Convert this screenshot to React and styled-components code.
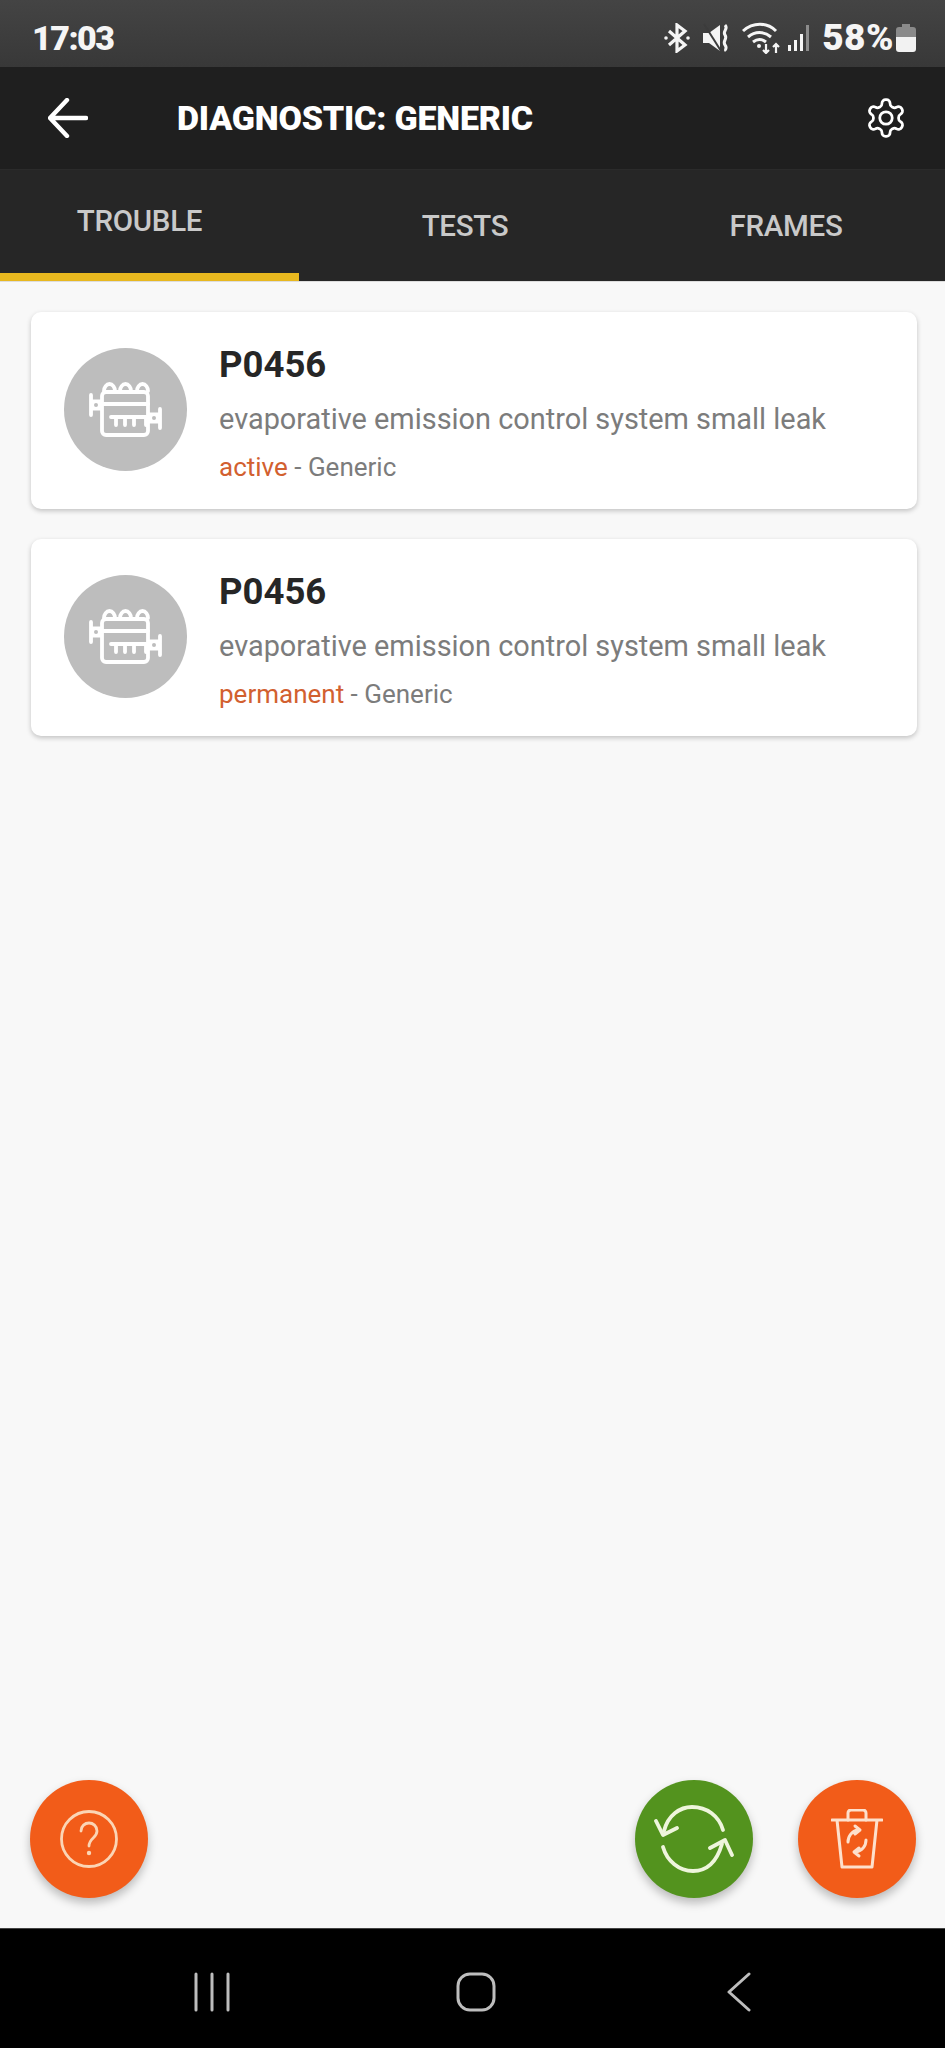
import React from "react";
import styled, { createGlobalStyle } from "styled-components";

const GlobalStyle = createGlobalStyle`
  html, body {
    margin: 0;
    padding: 0;
    background: #f8f8f8;
    font-family: Roboto, "Liberation Sans", sans-serif;
  }
`;

const Page = styled.div`
  width: 945px;
  height: 2048px;
  display: flex;
  flex-direction: column;
  overflow: hidden;
  background: #f8f8f8;
`;

const StatusBar = styled.div`
  height: 67px;
  flex: none;
  box-sizing: border-box;
  padding: 8px 29px 0 32px;
  display: flex;
  align-items: center;
  justify-content: space-between;
  background: linear-gradient(#444444, #383838);
  color: #f5f5f5;
`;

const StatusText = styled.span`
  font-family: Roboto, sans-serif;
  font-weight: 900;
  font-size: ${(p) => p.$size || "34px"};
  letter-spacing: ${(p) => p.$spacing || "0"};
  line-height: 1;
`;

const StatusIcons = styled.div`
  display: flex;
  align-items: center;
`;

const AppBar = styled.div`
  height: 103px;
  flex: none;
  box-sizing: border-box;
  padding: 0 37px 0 48px;
  display: flex;
  align-items: center;
  background: #1f1f1f;
  border-bottom: 1px solid #2b2b2b;
`;

const Title = styled.h1`
  flex: 1;
  margin: 0 0 0 89px;
  font-family: Roboto, sans-serif;
  font-weight: 900;
  font-size: 34px;
  letter-spacing: -0.2px;
  line-height: 1;
  color: #ffffff;
`;

const Tabs = styled.div`
  height: 112px;
  flex: none;
  display: grid;
  grid-template-columns: 299px 332px 310px;
  background: #262626;
  border-bottom: 1px solid #dddddd;
  box-sizing: border-box;
`;

const Tab = styled.div`
  box-sizing: border-box;
  display: flex;
  align-items: center;
  justify-content: center;
  font-size: 29.5px;
  font-weight: 500;
  color: #c9c9c9;
  padding: ${(p) => (p.$active ? "0 20px 1px 0" : "9px 0 0 0")};
  border-bottom: 8px solid ${(p) => (p.$active ? "#e8b81f" : "transparent")};
  letter-spacing: -0.3px;
`;

const Content = styled.div`
  flex: 1;
  display: flex;
  flex-direction: column;
  gap: 30px;
  padding: 30px 28px 0 31px;
`;

const Card = styled.div`
  height: 197px;
  box-sizing: border-box;
  padding: 36px 33px 0 33px;
  display: flex;
  gap: 32px;
  background: #ffffff;
  border-radius: 10px;
  box-shadow: 0 2px 5px rgba(0, 0, 0, 0.22);
`;

const Avatar = styled.div`
  width: 123px;
  height: 123px;
  flex: none;
  border-radius: 50%;
  background: #bdbdbd;
  display: flex;
  align-items: center;
  justify-content: center;
`;

const CardText = styled.div`
  display: flex;
  flex-direction: column;
  margin-top: -4px;
`;

const Code = styled.div`
  font-size: 36.5px;
  font-weight: 700;
  line-height: 41px;
  color: #262626;
`;

const Description = styled.div`
  margin-top: 17px;
  font-size: 28.9px;
  line-height: 34px;
  color: #7c7c7c;
  white-space: nowrap;
`;

const Meta = styled.div`
  margin-top: 16px;
  font-size: 26px;
  line-height: 30px;
  color: #7c7c7c;
`;

const State = styled.span`
  color: #d2602f;
`;

const FabRow = styled.div`
  flex: none;
  display: flex;
  gap: 45px;
  padding: 0 29px 30px 30px;
`;

const Fab = styled.div`
  width: 118px;
  height: 118px;
  border-radius: 50%;
  display: flex;
  align-items: center;
  justify-content: center;
  background: ${(p) => p.$color};
  box-shadow: 0 5px 10px rgba(0, 0, 0, 0.25);
  &:first-child {
    margin-right: auto;
  }
`;

const NavBar = styled.div`
  height: 120px;
  flex: none;
  box-sizing: border-box;
  padding: 43px 194px 0 194px;
  display: flex;
  justify-content: space-between;
  align-items: flex-start;
  background: #000000;
  border-top: 1px solid #444444;
`;

function Bluetooth() {
  return (
    <svg width="28" height="30" viewBox="0 0 28 30" fill="none" stroke="#f5f5f5" strokeWidth="3.2" style={{ marginRight: 11 }}>
      <path d="M6 8l16 14-8 6V2l8 6L6 22" />
      <circle cx="3" cy="15" r="1.8" fill="#f5f5f5" stroke="none" />
      <circle cx="25" cy="15" r="1.8" fill="#f5f5f5" stroke="none" />
    </svg>
  );
}

function Muted() {
  return (
    <svg width="28" height="30" viewBox="0 0 28 30" fill="none" style={{ marginRight: 12 }}>
      <path d="M1 10h6l11-8v26l-11-8H1z" fill="#f5f5f5" />
      <path d="M2 1l17 27" stroke="#3c3c3c" strokeWidth="2" />
      <path d="M23 2c4 4-3 6 0 10s-3 6 0 10 -1 4 1 6" stroke="#f5f5f5" strokeWidth="3" />
    </svg>
  );
}

function Wifi() {
  return (
    <svg width="40" height="32" viewBox="0 0 40 32" fill="none" stroke="#f5f5f5" strokeWidth="3" style={{ marginRight: 6 }}>
      <path d="M1 9c10-9 24-9 33 0" />
      <path d="M6 15c7-6 16-6 23 0" />
      <path d="M11 20c4-3 9-3 13 0" />
      <circle cx="17" cy="24" r="2" fill="#f5f5f5" stroke="none" />
      <path d="M24 22v9M21 28l3 3 3-3M34 31v-9M31 25l3-3 3 3" strokeWidth="2.2" />
    </svg>
  );
}

function Signal() {
  return (
    <svg width="24" height="28" viewBox="0 0 24 28" style={{ marginRight: 10 }}>
      <rect x="0" y="21" width="3" height="6" fill="#f5f5f5" />
      <rect x="6" y="16" width="3" height="11" fill="#f5f5f5" />
      <rect x="12" y="10" width="3" height="17" fill="#f5f5f5" />
      <rect x="18" y="1" width="3" height="26" fill="#8c8c8c" />
    </svg>
  );
}

function Battery() {
  return (
    <svg width="20" height="28" viewBox="0 0 20 28" style={{ marginLeft: 2 }}>
      <path d="M6 0h8v3h3a3 3 0 013 3v8H0V6a3 3 0 013-3h3z" fill="#8a8a8a" />
      <path d="M0 13h20v12a3 3 0 01-3 3H3a3 3 0 01-3-3z" fill="#f2f2f2" />
    </svg>
  );
}

function BackArrow() {
  return (
    <svg width="40" height="40" viewBox="0 0 40 40" fill="none" stroke="#ffffff" strokeWidth="4.4" strokeLinecap="round" strokeLinejoin="round">
      <path d="M38 20H3M19 2L2 20l17 18" />
    </svg>
  );
}

function Gear() {
  return (
    <svg width="44" height="44" viewBox="0 0 24 24" fill="none" stroke="#ffffff" strokeWidth="1.5" strokeLinecap="round" strokeLinejoin="round">
      <path d="M12.22 2h-.44a2 2 0 0 0-2 2v.18a2 2 0 0 1-1 1.73l-.43.25a2 2 0 0 1-2 0l-.15-.08a2 2 0 0 0-2.73.73l-.22.38a2 2 0 0 0 .73 2.73l.15.1a2 2 0 0 1 1 1.72v.51a2 2 0 0 1-1 1.74l-.15.09a2 2 0 0 0-.73 2.73l.22.38a2 2 0 0 0 2.73.73l.15-.08a2 2 0 0 1 2 0l.43.25a2 2 0 0 1 1 1.73V20a2 2 0 0 0 2 2h.44a2 2 0 0 0 2-2v-.18a2 2 0 0 1 1-1.73l.43-.25a2 2 0 0 1 2 0l.15.08a2 2 0 0 0 2.73-.73l.22-.39a2 2 0 0 0-.73-2.73l-.15-.08a2 2 0 0 1-1-1.74v-.5a2 2 0 0 1 1-1.74l.15-.09a2 2 0 0 0 .73-2.73l-.22-.38a2 2 0 0 0-2.73-.73l-.15.08a2 2 0 0 1-2 0l-.43-.25a2 2 0 0 1-1-1.73V4a2 2 0 0 0-2-2z" />
      <circle cx="12" cy="12" r="3.4" />
    </svg>
  );
}

function Engine() {
  return (
    <svg width="73" height="55" viewBox="0 0 73 55" fill="none" stroke="#ffffff" strokeWidth="3.8" strokeLinejoin="round" strokeLinecap="round">
      <rect x="13" y="10" width="46" height="43" rx="4" />
      <path d="M13 22h46" />
      <path d="M15 9a5.5 7 0 0111 0M31 9a5.5 7 0 0111 0M48 9a5.5 7 0 0111 0" />
      <path d="M2 13v20M71 27v19" />
      <path d="M3 18h9v10H3zM60 31h10v10H60z" fill="#ffffff" strokeWidth="1" />
      <circle cx="7" cy="23" r="2" fill="#bdbdbd" stroke="none" />
      <circle cx="65" cy="36" r="2" fill="#bdbdbd" stroke="none" />
      <path d="M22 35h35v8M27 35v8M36 35v8M45 35v8" />
    </svg>
  );
}

function Refresh() {
  return (
    <svg width="80" height="68" viewBox="0 0 80 68" fill="none" stroke="#eef5dc" strokeWidth="3.8" strokeLinecap="round" strokeLinejoin="round">
      <path d="M10 26C14 10 26 2 38 2c15 0 27 9 31 23" />
      <path d="M2 16l7 14 14-7" />
      <path d="M9 42c4 14 16 24 30 24 14 0 24-10 29-27" />
      <path d="M56 43l15-8 7 15" />
    </svg>
  );
}

function Trash() {
  return (
    <svg width="52" height="60" viewBox="0 0 52 60" fill="none" stroke="#fde0cc" strokeWidth="3" strokeLinecap="round" strokeLinejoin="round">
      <path d="M1 11h50M6 11l5 47h30l5-47" />
      <path d="M17 11V4a3 3 0 013-3h12a3 3 0 013 3v7" />
      <path d="M17 33c0-6 4-11 10-12M24 17l5 4-5 4" />
      <path d="M35 31c0 6-4 11-10 12M28 47l-5-4 5-4" />
    </svg>
  );
}

function Help() {
  return (
    <svg width="58" height="58" viewBox="0 0 58 58" fill="none" stroke="#fbd5b5" strokeWidth="2.8" strokeLinecap="round">
      <circle cx="29" cy="29" r="27.5" />
      <path d="M21 21c0-5 4-8 8-8s8 3 8 8c0 7-8 7-8 15" />
      <circle cx="29" cy="43" r="2.2" fill="#fbd5b5" stroke="none" />
    </svg>
  );
}

function NavRecent() {
  return (
    <svg width="36" height="40" viewBox="0 0 36 40" stroke="#bdbdbd" strokeWidth="3" strokeLinecap="round">
      <path d="M2 2v36M18 2v36M34 2v36" />
    </svg>
  );
}

function NavHome() {
  return (
    <svg width="40" height="40" viewBox="0 0 40 40" fill="none" stroke="#bdbdbd" strokeWidth="3" style={{ marginRight: 6 }}>
      <rect x="2" y="2" width="36" height="36" rx="12" />
    </svg>
  );
}

function NavBack() {
  return (
    <svg width="24" height="40" viewBox="0 0 24 40" fill="none" stroke="#bdbdbd" strokeWidth="3" strokeLinecap="round" strokeLinejoin="round">
      <path d="M22 2L2 20l20 18" />
    </svg>
  );
}

const codes = [
  { id: 1, state: "active" },
  { id: 2, state: "permanent" },
];

export default function App() {
  return (
    <Page>
      <GlobalStyle />
      <StatusBar>
        <StatusText $spacing="-1.5px">17:03</StatusText>
        <StatusIcons>
          <Bluetooth />
          <Muted />
          <Wifi />
          <Signal />
          <StatusText $size="37px" $spacing="0.5px">58%</StatusText>
          <Battery />
        </StatusIcons>
      </StatusBar>
      <AppBar>
        <BackArrow />
        <Title>DIAGNOSTIC: GENERIC</Title>
        <Gear />
      </AppBar>
      <Tabs>
        <Tab $active>TROUBLE</Tab>
        <Tab>TESTS</Tab>
        <Tab>FRAMES</Tab>
      </Tabs>
      <Content>
        {codes.map((c) => (
          <Card key={c.id}>
            <Avatar>
              <Engine />
            </Avatar>
            <CardText>
              <Code>P0456</Code>
              <Description>evaporative emission control system small leak</Description>
              <Meta>
                <State>{c.state}</State> - Generic
              </Meta>
            </CardText>
          </Card>
        ))}
      </Content>
      <FabRow>
        <Fab $color="#f25c19">
          <Help />
        </Fab>
        <Fab $color="#53931e">
          <Refresh />
        </Fab>
        <Fab $color="#f25c19">
          <Trash />
        </Fab>
      </FabRow>
      <NavBar>
        <NavRecent />
        <NavHome />
        <NavBack />
      </NavBar>
    </Page>
  );
}
